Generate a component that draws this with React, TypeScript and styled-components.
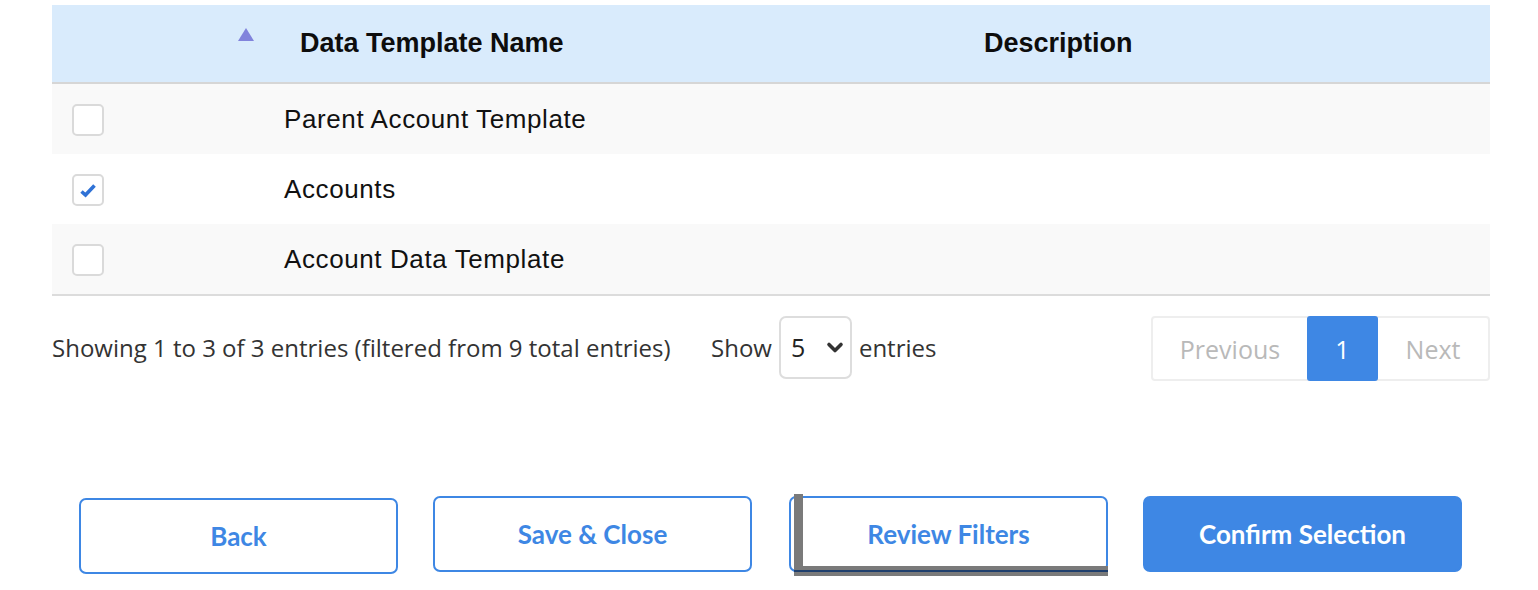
import React, {FC, useState} from 'react';
import styled, {createGlobalStyle} from 'styled-components';

const GlobalStyle = createGlobalStyle`
  *,
  *::before,
  *::after {
    margin: 0;
    padding: 0;
    box-sizing: border-box;
  }

  html, body {
    width: 100%;
    height: 100%;
    background: #ffffff;
  }

  body {
    font-family: 'Liberation Sans', Arial, sans-serif;
    color: #111111;
  }
`;

const Page = styled.div`
  width: 1538px;
  height: 590px;
  padding: 5px 48px 0 52px;
`

const Table = styled.div`
  width: 1438px;
  border-bottom: 2px solid #dcdcdc;
`

const HeadRow = styled.div`
  display: grid;
  grid-template-columns: 232px 700px 1fr;
  height: 79px;
  background: #d9ebfc;
  border-bottom: 2px solid #d6d6d6;
  align-items: center;
`

const SortCell = styled.div`
  display: flex;
  justify-content: flex-end;
  padding-right: 30px;
  align-self: start;
  padding-top: 23px;
`

const SortArrow = styled.span`
  width: 0;
  height: 0;
  border-left: 8px solid transparent;
  border-right: 8px solid transparent;
  border-bottom: 13px solid #8183dc;
`

const HeadCell = styled.div<{ $pad?: number }>`
  font-family: 'Liberation Sans', Arial, sans-serif;
  font-weight: 700;
  font-size: 27px;
  color: #0d0d0d;
  padding-left: ${p => p.$pad ?? 0}px;
`

const Row = styled.div<{ $odd: boolean }>`
  display: grid;
  grid-template-columns: 232px 1fr;
  height: 70px;
  align-items: center;
  background: ${p => (p.$odd ? '#f9f9f9' : '#ffffff')};
`

const CheckCell = styled.div`
  padding-left: 20px;
  padding-top: 2px;
`

const Box = styled.button<{ $on: boolean }>`
  width: 32px;
  height: 32px;
  border: 2px solid #dadada;
  border-radius: 5px;
  background: #ffffff;
  display: flex;
  align-items: center;
  justify-content: center;
  cursor: pointer;
  padding: 0;
`

const NameCell = styled.div`
  font-family: 'Liberation Sans', Arial, sans-serif;
  font-size: 26px;
  letter-spacing: 0.6px;
  color: #111111;
`

const Footer = styled.div`
  display: flex;
  align-items: center;
  height: 86px;
  padding-top: 16px;
  width: 1438px;
`

const Info = styled.div`
  font-family: 'Open Sans', 'Liberation Sans', sans-serif;
  font-size: 24px;
  color: #333333;
  width: 659px;
`

const Length = styled.div`
  display: flex;
  align-items: center;
  gap: 7px;
  font-family: 'Open Sans', 'Liberation Sans', sans-serif;
  font-size: 24px;
  color: #333333;
`

const Select = styled.div`
  width: 73px;
  height: 63px;
  border: 2px solid #dddddd;
  border-radius: 7px;
  display: flex;
  align-items: center;
  justify-content: space-between;
  padding: 0 6px 0 10px;
  font-size: 25px;
  color: #222222;
`

const Pager = styled.div`
  margin-left: auto;
  margin-top: 3px;
  display: flex;
  height: 65px;
  border: 2px solid #eeeeee;
  border-radius: 4px;
`

const PageBtn = styled.div<{ $w: number; $active?: boolean }>`
  width: ${p => p.$w}px;
  display: flex;
  align-items: center;
  justify-content: center;
  font-family: 'Open Sans', 'Liberation Sans', sans-serif;
  font-size: 25px;
  color: ${p => (p.$active ? '#ffffff' : '#b9b9b9')};
  background: ${p => (p.$active ? '#3e87e4' : 'transparent')};
  border-radius: ${p => (p.$active ? '3px' : '0')};
  margin: ${p => (p.$active ? '-2px 0' : '0')};
`

const Actions = styled.div`
  display: flex;
  align-items: flex-start;
  gap: 35px;
  padding: 114px 0 0 27px;
`

const ActionBtn = styled.button<{ $primary?: boolean; $pressed?: boolean; $low?: boolean }>`
  position: relative;
  width: 319px;
  height: 76px;
  margin-top: ${p => (p.$low ? '2px' : '0')};
  margin-left: ${p => (p.$pressed ? '2px' : '0')};
  border: 2px solid #3e87e4;
  border-radius: 7px;
  background: ${p => (p.$primary ? '#3e87e4' : '#ffffff')};
  color: ${p => (p.$primary ? '#ffffff' : '#3e87e4')};
  font-family: 'Lato', 'Liberation Sans', sans-serif;
  font-weight: 700;
  font-size: 26px;
  cursor: pointer;

  &::before {
    content: '';
    display: ${p => (p.$pressed ? 'block' : 'none')};
    position: absolute;
    left: 3px;
    top: -4px;
    right: -2px;
    bottom: -6px;
    border-left: 9px solid #7a7a7a;
    border-bottom: 10px solid #7a7a7a;
    pointer-events: none;
  }

  &::after {
    content: '';
    display: ${p => (p.$pressed ? 'block' : 'none')};
    position: absolute;
    left: 3px;
    right: -2px;
    bottom: -2px;
    height: 2px;
    background: #1f3f6d;
    pointer-events: none;
  }
`

const Check: FC = () => (
    <svg width="18" height="16" viewBox="0 0 18 16">
        <path d="M2.5 9.5 L6.5 13 L15.5 3.5" fill="none" stroke="#2f72d6" strokeWidth="3.6" strokeLinecap="butt" strokeLinejoin="miter"/>
    </svg>
)

const Chevron: FC = () => (
    <svg width="18" height="13" viewBox="0 0 18 13">
        <path d="M3 3.5 L9 9.5 L15 3.5" fill="none" stroke="#333" strokeWidth="3.6" strokeLinecap="round" strokeLinejoin="round"/>
    </svg>
)

const rows = [
    {name: 'Parent Account Template'},
    {name: 'Accounts'},
    {name: 'Account Data Template'},
]

const App: FC = () => {
    const [checked, setChecked] = useState<boolean[]>([false, true, false])

    const toggle = (i: number) => {
        setChecked(c => c.map((v, j) => (j === i ? !v : v)))
    }

    return (
        <Page>
            <GlobalStyle/>
            <Table>
                <HeadRow>
                    <SortCell><SortArrow/></SortCell>
                    <HeadCell $pad={16}>Data Template Name</HeadCell>
                    <HeadCell $pad={0}>Description</HeadCell>
                </HeadRow>
                {rows.map((r, i) => (
                    <Row key={r.name} $odd={i % 2 === 0}>
                        <CheckCell>
                            <Box $on={checked[i]} onClick={() => toggle(i)}>
                                {checked[i] && <Check/>}
                            </Box>
                        </CheckCell>
                        <NameCell>{r.name}</NameCell>
                    </Row>
                ))}
            </Table>
            <Footer>
                <Info>Showing 1 to 3 of 3 entries (filtered from 9 total entries)</Info>
                <Length>
                    Show
                    <Select>5 <Chevron/></Select>
                    entries
                </Length>
                <Pager>
                    <PageBtn $w={154}>Previous</PageBtn>
                    <PageBtn $w={71} $active>1</PageBtn>
                    <PageBtn $w={110}>Next</PageBtn>
                </Pager>
            </Footer>
            <Actions>
                <ActionBtn $low>Back</ActionBtn>
                <ActionBtn>Save &amp; Close</ActionBtn>
                <ActionBtn $pressed>Review Filters</ActionBtn>
                <ActionBtn $primary>Confirm Selection</ActionBtn>
            </Actions>
        </Page>
    );
};

export default App;
